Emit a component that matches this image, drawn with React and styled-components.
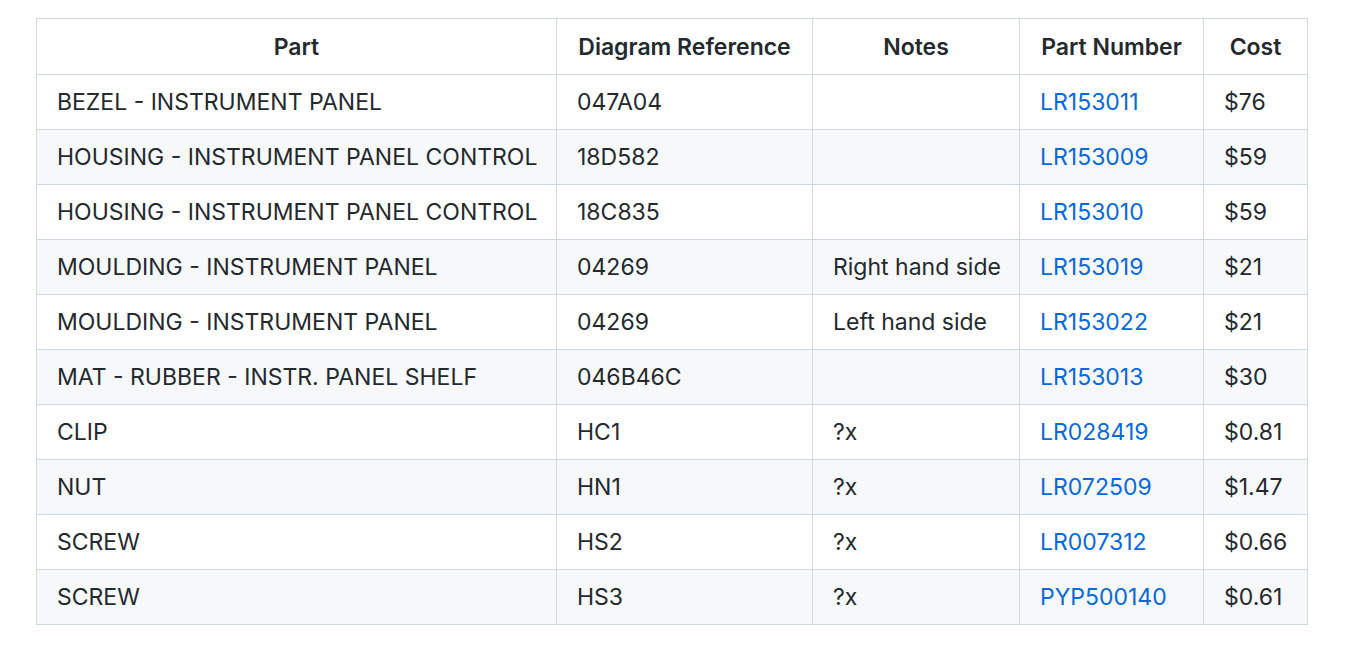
import React from 'react';
import styled, { createGlobalStyle } from 'styled-components';

const GlobalStyle = createGlobalStyle`
body {
  margin: 0;
  background: #ffffff;
  font-family: Inter, "Liberation Sans", sans-serif;
  color: #24292e;
}
`

const Page = styled.div`
padding: 18px 0 0 36px;
`

const Table = styled.table`
border-collapse: collapse;
border-spacing: 0;
table-layout: fixed;
width: 1272px;
font-size: 23px;
line-height: 28px;
`

const Row = styled.tr`
background-color: ${props => props.striped ? '#f6f8fa' : '#ffffff'};
`

const HeadCell = styled.th`
border: 1px solid #d0d8e2;
padding: 14px 20px 13px;
font-weight: 600;
text-align: center;
white-space: nowrap;
`

const Cell = styled.td`
border: 1px solid #d0d8e2;
padding: 13px 20px;
white-space: nowrap;
`

const PartLink = styled.a`
color: #0969da;
text-decoration: none;
`

const columns = [
  { title: 'Part', width: 520 },
  { title: 'Diagram Reference', width: 256 },
  { title: 'Notes', width: 207 },
  { title: 'Part Number', width: 184 },
  { title: 'Cost', width: 104 },
]

const rows = [
  ['BEZEL - INSTRUMENT PANEL', '047A04', '', 'LR153011', '$76'],
  ['HOUSING - INSTRUMENT PANEL CONTROL', '18D582', '', 'LR153009', '$59'],
  ['HOUSING - INSTRUMENT PANEL CONTROL', '18C835', '', 'LR153010', '$59'],
  ['MOULDING - INSTRUMENT PANEL', '04269', 'Right hand side', 'LR153019', '$21'],
  ['MOULDING - INSTRUMENT PANEL', '04269', 'Left hand side', 'LR153022', '$21'],
  ['MAT - RUBBER - INSTR. PANEL SHELF', '046B46C', '', 'LR153013', '$30'],
  ['CLIP', 'HC1', '?x', 'LR028419', '$0.81'],
  ['NUT', 'HN1', '?x', 'LR072509', '$1.47'],
  ['SCREW', 'HS2', '?x', 'LR007312', '$0.66'],
  ['SCREW', 'HS3', '?x', 'PYP500140', '$0.61'],
]

const App = () => {
  return (
    <Page>
      <GlobalStyle />
      <Table>
        <colgroup>
          {columns.map(c => <col key={c.title} style={{ width: c.width }} />)}
        </colgroup>
        <thead>
          <Row>
            {columns.map(c => <HeadCell key={c.title}>{c.title}</HeadCell>)}
          </Row>
        </thead>
        <tbody>
          {rows.map((r, i) => (
            <Row key={i} striped={i % 2 === 1}>
              <Cell>{r[0]}</Cell>
              <Cell>{r[1]}</Cell>
              <Cell>{r[2]}</Cell>
              <Cell><PartLink href="#">{r[3]}</PartLink></Cell>
              <Cell>{r[4]}</Cell>
            </Row>
          ))}
        </tbody>
      </Table>
    </Page>
  )
}

export default App
